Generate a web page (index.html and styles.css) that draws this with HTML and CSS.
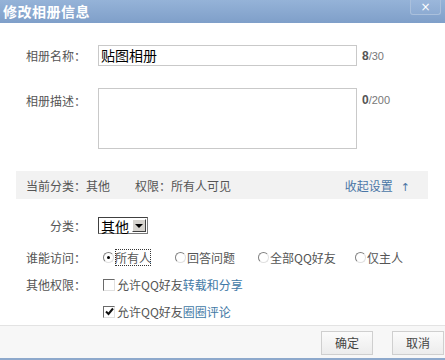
FILE: index.html
```html
<!DOCTYPE html>
<html lang="zh-CN">
<head>
<meta charset="utf-8">
<title>修改相册信息</title>
<link rel="stylesheet" href="styles.css">
</head>
<body>
<div class="dialog">
  <div class="titlebar">
    <span class="title">修改相册信息</span>
    <span class="close">×</span>
  </div>
  <div class="body">
    <div class="row row-name">
      <span class="lbl">相册名称：</span>
      <div class="input">贴图相册</div>
      <span class="count"><b>8</b>/30</span>
    </div>
    <div class="row row-desc">
      <span class="lbl">相册描述：</span>
      <div class="textarea"></div>
      <span class="count"><b>0</b>/200</span>
    </div>
    <div class="summary">
      <span class="sum-cat">当前分类：其他</span>
      <span class="sum-perm">权限：所有人可见</span>
      <span class="toggle">收起设置<span class="arrow">↑</span></span>
    </div>
    <div class="row row-cat">
      <span class="lbl">分类：</span>
      <div class="select"><span class="sel-text">其他</span><span class="sel-btn"><span class="tri"></span></span></div>
    </div>
    <div class="row row-opt">
      <span class="lbl">谁能访问：</span>
      <div class="radios">
        <span class="radio checked"><span class="dot"></span><span class="rtext focus">所有人</span></span>
        <span class="radio"><span class="dot"></span><span class="rtext">回答问题</span></span>
        <span class="radio"><span class="dot"></span><span class="rtext">全部QQ好友</span></span>
        <span class="radio"><span class="dot"></span><span class="rtext">仅主人</span></span>
      </div>
    </div>
    <div class="row row-opt">
      <span class="lbl">其他权限：</span>
      <span class="check"><span class="box"></span>允许QQ好友<span class="link">转载和分享</span></span>
    </div>
    <div class="row row-opt">
      <span class="lbl"></span>
      <span class="check"><span class="box checked"><svg width="9" height="9" viewBox="0 0 9 9"><path d="M1 4.5 L3.5 7 L8 1.5" fill="none" stroke="#111" stroke-width="2"/></svg></span>允许QQ好友<span class="link">圈圈评论</span></span>
    </div>
  </div>
  <div class="footer">
    <span class="btn">确定</span>
    <span class="btn">取消</span>
  </div>
</div>
</body>
</html>
```
FILE: styles.css
```css
* { box-sizing: border-box; }
html, body { margin: 0; padding: 0; }
body {
  width: 445px;
  height: 360px;
  overflow: hidden;
  background: #fff;
  font-family: "Noto Sans CJK SC", "Noto Sans", sans-serif;
  font-size: 12px;
  color: #555;
}
.dialog {
  width: 445px;
  height: 360px;
  display: flex;
  flex-direction: column;
}
.titlebar {
  height: 23px;
  flex: none;
  background: linear-gradient(#95b3d8, #7f9fc9);
  display: flex;
  justify-content: space-between;
  align-items: flex-start;
}
.title {
  color: #fff;
  font-weight: bold;
  font-size: 14px;
  line-height: 23px;
  padding-left: 3px;
  letter-spacing: 0.5px;
}
.close {
  width: 31px;
  height: 15px;
  margin-right: 4px;
  border: 1px solid #aac0dc;
  border-top: none;
  border-radius: 0 0 3px 3px;
  color: #fff;
  font-family: "DejaVu Sans", sans-serif;
  font-size: 12px;
  line-height: 14px;
  text-align: center;
  background: linear-gradient(#9bb7db, #8dabd2);
}
.body {
  flex: 1;
  display: flex;
  flex-direction: column;
}
.row {
  display: flex;
  align-items: center;
}
.lbl {
  width: 60px;
  margin-left: 26px;
  margin-right: 12px;
  text-align: right;
  flex: none;
  color: #555;
}
.row-name {
  margin-top: 22px;
  height: 21px;
}
.input {
  width: 259px;
  height: 21px;
  border: 1px solid #c9c9c9;
  color: #000;
  font-size: 14px;
  line-height: 19px;
  padding-left: 2px;
}
.count {
  margin-left: 5px;
  font-size: 11px;
  color: #777;
  font-family: "Liberation Sans", sans-serif;
}
.count b { color: #555; font-size: 12px; }
.row-desc {
  margin-top: 22px;
  align-items: flex-start;
}
.row-desc .lbl, .row-desc .count { margin-top: 5px; }
.row-desc .lbl { line-height: 16px; }
.textarea {
  width: 259px;
  height: 61px;
  border: 1px solid #c9c9c9;
}
.summary {
  margin: 22px 17px 0 16px;
  height: 28px;
  background: #f2f2f2;
  display: flex;
  align-items: center;
  color: #555;
  padding-left: 10px;
}
.sum-perm { margin-left: 25px; }
.toggle {
  margin-left: auto;
  margin-right: 18px;
  color: #4a76a6;
}
.arrow {
  margin-left: 8px;
  font-family: "DejaVu Sans", sans-serif;
  font-size: 11px;
}
.row-cat {
  margin-top: 18px;
  height: 17px;
}
.select {
  width: 50px;
  height: 17px;
  border: 1px solid #7a7a7a;
  border-top-color: #404040;
  border-left-color: #404040;
  display: flex;
  align-items: center;
  justify-content: space-between;
  padding: 1px;
}
.sel-text {
  color: #000;
  font-size: 14px;
  line-height: 14px;
  padding-left: 1px;
}
.sel-btn {
  width: 14px;
  height: 13px;
  background: #d6d3ce;
  border: 1px solid;
  border-color: #fff #404040 #404040 #fff;
  display: flex;
  align-items: center;
  justify-content: center;
}
.tri {
  width: 0;
  height: 0;
  border-left: 4px solid transparent;
  border-right: 4px solid transparent;
  border-top: 4px solid #000;
}
.row-opt { height: 27px; }
.row-cat + .row-opt { margin-top: 10px; }
.radios {
  display: grid;
  grid-template-columns: 72px 83px 97px auto;
  margin-left: 5px;
}
.radio {
  display: flex;
  align-items: center;
}
.dot {
  width: 11px;
  height: 11px;
  border-radius: 50%;
  border: 1px solid;
  border-color: #808080 #e0e0e0 #e0e0e0 #808080;
  background: #fff;
  margin-right: 1px;
  position: relative;
}
.radio.checked .dot::after {
  content: "";
  position: absolute;
  left: 3px;
  top: 3px;
  width: 3px;
  height: 3px;
  border-radius: 50%;
  background: #000;
}
.rtext { color: #555; }
.rtext.focus { outline: 1px dotted #333; outline-offset: -1px; }
.check {
  display: flex;
  align-items: center;
  margin-left: 5px;
  color: #555;
}
.box {
  width: 12px;
  height: 12px;
  border: 1px solid;
  border-color: #6a6a6a #e0e0e0 #e0e0e0 #6a6a6a;
  background: #fff;
  margin-right: 2px;
  display: flex;
  align-items: center;
  justify-content: center;
}
.link { color: #3f79a6; }
.footer {
  flex: none;
  height: 35px;
  background: #f7f7f7;
  border-top: 1px solid #e3e3e3;
  border-bottom: 2px solid #8ea9cc;
  display: flex;
  justify-content: flex-end;
  align-items: center;
  gap: 19px;
  padding-right: 1px;
  padding-top: 1px;
}
.btn {
  width: 52px;
  height: 24px;
  border: 1px solid #cfcfcf;
  background: linear-gradient(#fbfbfb, #ececec);
  color: #444;
  text-align: center;
  line-height: 22px;
  font-size: 12px;
}
```
